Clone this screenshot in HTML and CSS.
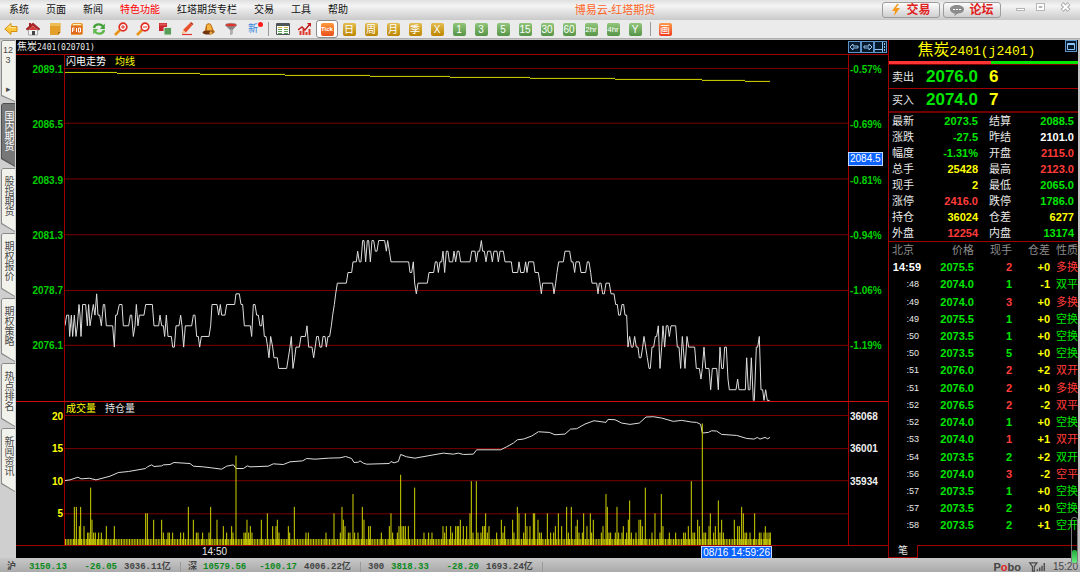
FILE: index.html
```html
<!DOCTYPE html>
<html lang="zh-CN">
<head>
<meta charset="utf-8">
<title>博易云-红塔期货</title>
<link rel="stylesheet" href="styles.css">
</head>
<body>
<div class="app">
  <header class="titlebar">
    <nav class="menu">
      <button>系统</button><button>页面</button><button>新闻</button><button class="hot">特色功能</button><button>红塔期货专栏</button><button>交易</button><button>工具</button><button>帮助</button>
    </nav>
    <h1 class="app-name">博易云-红塔期货</h1>
    <div class="actions">
      <button class="pill"><svg width="10" height="12" viewBox="0 0 10 12"><path d="M6 0L1 7h3L3 12 9 4H5L8 0z" fill="#f39a1d"/></svg>交易</button>
      <button class="pill"><svg width="14" height="12" viewBox="0 0 14 12"><path d="M7 1C3 1 0 2.800 0 5.200S3 9.500 5 9.600L4 12l4-2.500c4-.2 6-2 6-4.300S11 1 7 1z" fill="#8c8c8c"/><path d="M3 5h2v1H3zM6 5h2v1H6zM9 5h2v1H9z" fill="#fff"/></svg>论坛</button>
    </div>
    <div class="window-controls">
      <button aria-label="最小化"><svg width="11" height="12" viewBox="0 0 11 12"><rect x="1.500" y="7.500" width="8" height="2" fill="#fff" stroke="#b5b5b5"/></svg></button>
      <button aria-label="还原"><svg width="11" height="12" viewBox="0 0 11 12"><rect x="1.500" y="2.500" width="8" height="7" fill="#fff" stroke="#b5b5b5"/><path d="M4 5.500h3v1H4z" fill="#ddd" stroke="#b5b5b5"/></svg></button>
      <button aria-label="关闭" class="close"><svg width="11" height="12" viewBox="0 0 11 12"><path d="M2 2.500l7 7M9 2.500l-7 7" stroke="#aaa" stroke-width="4"/><path d="M2.500 3l6 6M8.500 3l-6 6" stroke="#fff" stroke-width="2"/></svg></button>
    </div>
  </header>

  <div class="toolbar">
    <button aria-label="后退"><svg width="14" height="14" viewBox="0 0 14 14"><path d="M7 1.500v3h6v5H7v3L.8 7z" fill="#fcc53a" stroke="#d48f12"/><path d="M3 6.500l3-3v2h6" fill="none" stroke="#ffe691"/></svg></button>
    <button aria-label="首页"><svg width="14" height="14" viewBox="0 0 14 14"><path d="M2.500 6h9v7h-9z" fill="#f2f2f2" stroke="#aaa"/><path d="M3 1h2v3H3z" fill="#a92020"/><path d="M0 7l7-6 7 6-1.500 1L7 3.500 1.500 8z" fill="#b51f22" stroke="#86191b" stroke-width=".6"/><path d="M7 4L3 7.500V8h8v-.5z" fill="#d63a35"/><path d="M6 9h3v4H6z" fill="#444"/></svg></button>
    <button aria-label="笔记"><svg width="14" height="14" viewBox="0 0 14 14"><path d="M2 1h10.500v9L10 13H2z" fill="#e2a02a"/><path d="M2 1h10.500v3H2z" fill="#efbd55"/><path d="M12.500 10H10v3z" fill="#a76a0c"/></svg></button>
    <button aria-label="F10"><svg width="14" height="14" viewBox="0 0 14 14"><path d="M1 3l2-2h9l1 2v9l-2 1H1z" fill="#ec9a35"/><path d="M1 4h11v8H1z" fill="#e26a20"/><path d="M3 2h8v1H3z" fill="#fff0c0"/><path d="M2.500 10V6h2M3 8h1.500M6.500 6v4M8.500 6h2v4h-2z" fill="none" stroke="#fff" stroke-width="1"/></svg></button>
    <button aria-label="刷新"><svg width="14" height="14" viewBox="0 0 14 14"><path d="M2 6c.5-4 7-5 9-1.500" fill="none" stroke="#45a139" stroke-width="2.400"/><path d="M12.800 1.500V7H8z" fill="#45a139"/><path d="M12 8c-.5 4-7 5-9 1.500" fill="none" stroke="#5eb84c" stroke-width="2.400"/><path d="M1.200 12.500V7H6z" fill="#5eb84c"/></svg></button>
    <button aria-label="放大"><svg width="14" height="14" viewBox="0 0 14 14"><path d="M6 8l-5 5" stroke="#e99417" stroke-width="2.600"/><circle cx="9" cy="5" r="3.800" fill="#fff" stroke="#e02c22" stroke-width="1.700"/><path d="M7 5h4M9 3v4" stroke="#e02c22"/></svg></button>
    <button aria-label="缩小"><svg width="14" height="14" viewBox="0 0 14 14"><path d="M6 8l-5 5" stroke="#e99417" stroke-width="2.600"/><circle cx="9" cy="5" r="3.800" fill="#fff" stroke="#e02c22" stroke-width="1.700"/><path d="M7 5h4" stroke="#e02c22"/></svg></button>
    <button aria-label="叠加"><svg width="14" height="14" viewBox="0 0 14 14"><path d="M1 1h8v8H1z" fill="#c8262b"/><path d="M1.500 1.500h7v2h-7z" fill="#df5552"/><path d="M6 5.500h7.500V13H6z" fill="#5a9c5a" stroke="#dfe9df"/></svg></button>
    <button aria-label="画线"><svg width="14" height="14" viewBox="0 0 14 14"><path d="M3 8l7-7 2.500 2L6 10.500z" fill="#e8502c"/><path d="M10 1l1-1 2.500 2-1 1z" fill="#b72b17"/><path d="M3 8l-1.500 4L6 10.500z" fill="#f6c48c"/><path d="M2 12.500h10" stroke="#e0352b" stroke-width="1.200"/></svg></button>
    <button aria-label="预警"><svg width="14" height="14" viewBox="0 0 14 14"><path d="M4 3C6 0 9 1 10 4l1 3 2 3-3 2-9-1 2-3z" fill="#c06f16"/><path d="M5 3c1-1 3-1 4 1l1 4-5 1z" fill="#f3b53f"/><ellipse cx="6" cy="10.500" rx="5.500" ry="2" fill="#703313"/><circle cx="9" cy="11" r="1.700" fill="#e2a743"/></svg></button>
    <button aria-label="筛选"><svg width="14" height="14" viewBox="0 0 14 14"><path d="M1 3l5 5v5l2.500-1V8L13 3z" fill="#858585"/><ellipse cx="7" cy="3" rx="5.500" ry="1.700" fill="#e0352b" stroke="#888" stroke-width=".6"/><path d="M6.500 7.500h1v5h-1z" fill="#d7d7d7"/></svg></button>
    <button class="new-mark" aria-label="新功能">新<i></i></button>
    <span class="sep"></span>
    <button aria-label="报价表"><svg width="14" height="14" viewBox="0 0 14 14"><path d="M.5 1.500h13v11H.5z" fill="#fff" stroke="#4c5658"/><path d="M1 2h12v2H1z" fill="#4c5658"/><path d="M2 5.500h4M8 5.500h4" stroke="#d8b43a"/><path d="M2 7.500h4M2 9.500h4M2 11.500h4M8 7.500h4M8 9.500h4M8 11.500h4" stroke="#5f9f58"/></svg></button>
    <button aria-label="走势图"><svg width="14" height="14" viewBox="0 0 14 14"><path d="M2.500 13V9M5.500 13V7M8.500 13v-3M11.500 13V7" stroke="#e2362b" stroke-width="2"/><path d="M0 8l4-3 3 3 5-6" fill="none" stroke="#c41b1b" stroke-width="1.500"/><path d="M9 1h4v4z" fill="#c41b1b"/></svg></button>
    <button class="active"><span class="period tick">Tick</span></button>
    <button><span class="period gold">日</span></button>
    <button><span class="period gold">周</span></button>
    <button><span class="period gold">月</span></button>
    <button><span class="period gold">季</span></button>
    <button><span class="period gold">X</span></button>
    <button><span class="period green">1</span></button>
    <button><span class="period green">3</span></button>
    <button><span class="period green">5</span></button>
    <button><span class="period green">15</span></button>
    <button><span class="period green">30</span></button>
    <button><span class="period green">60</span></button>
    <button><span class="period green small">2hr</span></button>
    <button><span class="period green small">4hr</span></button>
    <button><span class="period green">Y</span></button>
    <span class="sep"></span>
    <button><span class="period red">画</span></button>
  </div>

  <main class="workspace">
    <aside class="tabs">
      <button class="tab first"><span class="num">12</span><span class="num">3</span><span class="arrow">▸</span></button>
      <button class="tab selected"><span>国内期货</span></button>
      <button class="tab"><span>股指期货</span></button>
      <button class="tab"><span>期权报价</span></button>
      <button class="tab"><span>期权策略</span></button>
      <button class="tab"><span>热点排名</span></button>
      <button class="tab"><span>新闻资讯</span></button>
    </aside>

    <section class="chart">
      <div class="chart-title">
        <span>焦炭<span class="code">2401(020701)</span></span>
        <div class="chart-tools">
          <button aria-label="左移"><svg width="13" height="12" viewBox="0 0 13 12"><rect class="frame" x=".5" y=".5" width="12" height="11"/><path class="ink" d="M2 6l3-3v2h5v2H5v2z"/></svg></button>
          <button aria-label="右移"><svg width="13" height="12" viewBox="0 0 13 12"><rect class="frame" x=".5" y=".5" width="12" height="11"/><path class="ink" d="M11 6L8 3v2H3v2h5v2z"/></svg></button>
          <button aria-label="侧栏"><svg width="13" height="12" viewBox="0 0 13 12"><rect class="frame" x=".5" y=".5" width="12" height="11"/><path class="ink" d="M1 8.500h7M8.500 1v10M10.500 2v2M10.500 5v2M10.500 8v2"/></svg></button>
        </div>
      </div>

      <div class="panel price">
        <div class="axis left"><span>2089.1</span><span>2086.5</span><span>2083.9</span><span>2081.3</span><span>2078.7</span><span>2076.1</span></div>
        <div class="plot">
          <svg viewBox="0 0 783 347" preserveAspectRatio="none">
            <path class="grid-line" d="M0 13.500H783M0 68.500H783M0 124.500H783M0 180.500H783M0 236.500H783M0 291.500H783"/>
            <path class="average" d="M0 17.500H52M52 18.500H135M135 19.500H220M220 20.500H305M305 21.500H385M385 22.500H465M465 23.500H550M550 24.500H637M637 25.500H680M680 26.500H705"/>
            <g transform="translate(-5 186.300) scale(.33333 10.700)">
              <path class="series" d="M15 8L20 7 26 7 29 9 34 7 38 9 43 7 48 9 52 8 57 6 60 7 63 9 68 6 77 6 82 8 86 6 90 8 95 7 100 6 105 7 110 5 114 7 119 7 124 8 130 6 134 6 139 8 158 8 163 10 167 7 171 7 178 6 186 6 190 8 206 8 211 7 215 7 220 9 225 8 229 6 234 8 238 7 252 7 257 6 277 6 282 8 296 8 300 7 305 8 310 8 314 9 319 7 324 9 334 9 338 10 343 10 348 8 357 8 362 7 366 8 371 10 376 8 395 8 400 7 405 7 410 9 415 9 419 10 424 9 447 9 452 8 456 6 471 6 476 7 481 6 485 7 495 7 500 6 524 6 528 5 538 5 543 6 548 6 553 8 571 8 575 9 580 6 585 6 590 7 595 7 600 8 605 8 608 7 613 9 618 9 623 10 627 11 632 9 638 10 642 11 652 11 656 12 680 12 685 11 690 10 694 9 699 12 704 11 708 10 718 10 723 9 736 9 741 8 746 10 756 10 761 11 770 9 775 9 780 10 785 10 789 9 795 9 799 10 804 9 809 9 814 8 818 7 823 6 827 5 832 4 859 4 864 3 875 3 879 2 889 2 893 1 898 2 903 2 908 0 912 0 917 2 922 0 926 0 931 2 936 0 941 0 946 1 951 1 956 0 974 0 979 1 983 0 988 1 993 2 1046 2 1050 3 1055 3 1060 2 1064 4 1069 5 1074 4 1102 4 1107 3 1121 3 1126 2 1131 2 1135 3 1140 2 1145 2 1149 1 1154 3 1159 1 1164 1 1168 2 1178 2 1182 1 1187 2 1192 1 1197 1 1202 2 1230 2 1235 1 1245 1 1249 2 1254 1 1259 1 1264 0 1268 1 1273 1 1278 2 1283 1 1292 1 1297 2 1302 1 1311 1 1315 2 1320 1 1330 1 1335 2 1354 2 1358 3 1373 3 1377 2 1382 3 1392 3 1397 2 1401 3 1406 2 1421 2 1425 3 1435 3 1440 4 1444 5 1448 4 1478 4 1482 5 1487 4 1491 3 1496 2 1510 2 1515 1 1529 1 1534 2 1539 2 1544 3 1548 2 1558 2 1563 3 1577 3 1582 2 1587 2 1592 3 1596 4 1610 4 1614 5 1618 4 1623 4 1628 5 1633 5 1638 4 1648 4 1653 5 1662 5 1667 6 1672 6 1676 7 1681 7 1686 6 1691 6 1695 7 1700 7 1704 10 1709 9 1714 10 1719 10 1724 9 1729 10 1734 10 1738 11 1743 11 1748 10 1752 9 1757 10 1762 11 1767 12 1771 12 1776 10 1781 10 1786 9 1790 9 1795 8 1800 12 1805 10 1809 8 1814 10 1819 8 1824 8 1828 9 1833 8 1847 8 1852 10 1857 10 1862 12 1867 9 1875 12 1881 9 1886 10 1904 10 1909 12 1918 12 1923 13 1927 12 1932 10 1937 12 1947 12 1952 14 1957 12 1970 12 1975 14 1980 10 1985 12 1990 12 1994 10 1999 10 2004 13 2008 14 2028 14 2033 13 2037 14 2056 14 2060 11 2065 14 2070 14 2074 11 2080 15 2083 15 2089 10 2093 10 2098 9 2103 14 2108 14 2112 15 2117 14 2122 15 2129 15"/>
            </g>
          </svg>
          <div class="legend"><span class="yellow">闪电走势</span><span class="yellow">均线</span></div>
        </div>
        <div class="axis right"><span>-0.57%</span><span>-0.69%</span><span>-0.81%</span><span>-0.94%</span><span>-1.06%</span><span>-1.19%</span><output class="cursor-price">2084.5</output></div>
      </div>

      <div class="panel volume">
        <div class="axis left"><span>20</span><span>15</span><span>10</span><span>5</span></div>
        <div class="plot">
          <svg viewBox="0 0 783 143" preserveAspectRatio="none">
            <path class="grid-line" d="M0 13.500H783M0 46.500H783M0 78.500H783M0 111.500H783"/>
            <g transform="translate(-5 -2) scale(.33333)">
              <path class="series" d="M15 241L30 239 54 231 63 236 88 234 108 239 150 228 175 217 205 214 257 205 262 200 275 194 282 199 305 197 310 194 330 193 342 187 390 190 400 198 430 200 455 203 485 207 500 198 520 194 528 205 550 205 562 197 570 200 625 198 640 191 670 193 690 185 728 182 740 175 765 177 805 174 840 173 857 169 875 175 882 187 895 186 900 182 910 189 920 192 988 190 993 184 1002 188 1015 184 1022 163 1040 170 1065 174 1110 166 1150 159 1180 162 1195 159 1210 163 1240 162 1250 149 1322 149 1340 140 1360 129 1372 119 1390 117 1415 108 1435 95 1468 97 1485 104 1515 102 1532 87 1550 86 1575 72 1602 62 1638 67 1644 58 1665 59 1685 69 1710 73 1738 69 1758 51 1780 50 1805 54 1840 64 1865 61 1895 66 1910 67 1922 73 1927 99 1945 97 1955 92 1970 93 1985 103 2030 106 2060 115 2082 117 2092 112 2100 117 2115 112 2123 116 2130 112"/>
            </g>
            <path class="unit-bars" d="M0 139.500H706"/>
            <g transform="translate(-5 143) scale(.33333 6.400)">
              <path class="bars" d="M43 0V-6M49 0V-6M58 0V-3M62 0V-6M72 0V-3M83 0V-2M87 0V-2M92 0V-9M96 0V-4M101 0V-2M106 0V-2M116 0V-2M124 0V-2M139 0V-3M163 0V-3M257 0V-5M262 0V-5M281 0V-4M305 0V-4M310 0V-2M324 0V-2M328 0V-2M338 0V-2M362 0V-2M371 0V-2M385 0V-6M400 0V-4M409 0V-2M414 0V-2M428 0V-2M447 0V-2M452 0V-6M471 0V-4M490 0V-3M500 0V-2M515 0V-3M519 0V-2M528 0V-14"/>
              <path class="bars" d="M552 0V-2M557 0V-2M561 0V-4M566 0V-2M571 0V-3M576 0V-2M604 0V-4M622 0V-5M638 0V-3M648 0V-3M652 0V-4M657 0V-2M685 0V-3M689 0V-2M703 0V-6M738 0V-2M745 0V-2M798 0V-2M822 0V-5M841 0V-2M846 0V-6M850 0V-4M855 0V-3M865 0V-2M870 0V-2M879 0V-8M884 0V-2M894 0V-2M907 0V-6M912 0V-4M926 0V-3M931 0V-3M964 0V-2M988 0V-3M993 0V-5M998 0V-2M1012 0V-2M1017 0V-3M1022 0V-11M1026 0V-3M1031 0V-3M1036 0V-3M1045 0V-3M1064 0V-9M1092 0V-2M1106 0V-2M1116 0V-2M1149 0V-3M1154 0V-2M1159 0V-3M1172 0V-3M1177 0V-2M1187 0V-3M1192 0V-3M1196 0V-3M1201 0V-4M1210 0V-3M1220 0V-3M1230 0V-5M1234 0V-10M1239 0V-2M1249 0V-10M1254 0V-2M1263 0V-2M1268 0V-3M1273 0V-3M1277 0V-5M1282 0V-2M1287 0V-3"/>
              <path class="bars" transform="translate(1260)" d="M50 0V-2M64 0V-4M69 0V-2M74 0V-3M98 0V-4M102 0V-2M112 0V-6M117 0V-5M131 0V-2M136 0V-5M141 0V-3M150 0V-3M160 0V-5M164 0V-5M174 0V-4M179 0V-2M184 0V-2M202 0V-5M212 0V-2M221 0V-2M226 0V-3M235 0V-5M245 0V-3M260 0V-6M265 0V-2M274 0V-6M288 0V-3M292 0V-4M297 0V-2M307 0V-2M311 0V-5M321 0V-3M331 0V-5M335 0V-2M340 0V-4M364 0V-2M369 0V-3M378 0V-8M382 0V-6M387 0V-2M392 0V-2M406 0V-2M411 0V-6M416 0V-2M426 0V-2M430 0V-3M440 0V-2M445 0V-4M449 0V-7M454 0V-2M468 0V-2M477 0V-4M482 0V-4M487 0V-3M496 0V-9M516 0V-2M525 0V-5M540 0V-2M544 0V-8M549 0V-3M568 0V-2M587 0V-2M611 0V-2M616 0V-2M625 0V-3M634 0V-10M639 0V-2M644 0V-2M653 0V-4M658 0V-3M667 0V-19M672 0V-2M677 0V-2M687 0V-3M691 0V-5M701 0V-2M706 0V-3M715 0V-7M720 0V-2M725 0V-4M730 0V-2M763 0V-4M773 0V-3M778 0V-3M785 0V-6M790 0V-5M795 0V-2M800 0V-2M810 0V-2M824 0V-5M838 0V-2M843 0V-2M852 0V-2M856 0V-3M861 0V-2M867 0V-2M871 0V-2"/>
            </g>
          </svg>
          <div class="legend"><span class="yellow">成交量</span><span>持仓量</span></div>
        </div>
        <div class="axis right white"><span>36068</span><span>36001</span><span>35934</span></div>
      </div>

      <div class="time-axis"><span>14:50</span><output class="cursor-time">08/16 14:59:26</output></div>
    </section>

    <section class="quote">
      <div class="quote-head"><h2>焦炭<span>2401(j2401)</span></h2>
        <button aria-label="窗口"><svg width="12" height="12" viewBox="0 0 12 12"><rect class="frame" x=".5" y=".5" width="11" height="11"/><path class="ink" d="M2.500 3.500h7v6h-7zM2.500 4.500h7"/></svg></button>
      </div>
      <div class="ratio"><i></i></div>
      <div class="offer"><span>卖出</span><b class="g">2076.0</b><b class="y">6</b></div>
      <div class="offer last"><span>买入</span><b class="g">2074.0</b><b class="y">7</b></div>
      <table class="facts">
        <tr><th>最新</th><td class="g">2073.5</td><th>结算</th><td class="g">2088.5</td></tr>
        <tr><th>涨跌</th><td class="g">-27.5</td><th>昨结</th><td class="w">2101.0</td></tr>
        <tr><th>幅度</th><td class="g">-1.31%</td><th>开盘</th><td class="r">2115.0</td></tr>
        <tr><th>总手</th><td class="y">25428</td><th>最高</th><td class="r">2123.0</td></tr>
        <tr><th>现手</th><td class="y">2</td><th>最低</th><td class="g">2065.0</td></tr>
        <tr><th>涨停</th><td class="r">2416.0</td><th>跌停</th><td class="g">1786.0</td></tr>
        <tr><th>持仓</th><td class="y">36024</td><th>仓差</th><td class="y">6277</td></tr>
        <tr><th>外盘</th><td class="r">12254</td><th>内盘</th><td class="g">13174</td></tr>
      </table>
      <div class="ticks-wrap">
        <table class="ticks">
          <thead><tr><th>北京</th><th>价格</th><th>现手</th><th>仓差</th><th>性质</th></tr></thead>
          <tbody>
            <tr><td class="full">14:59</td><td class="g">2075.5</td><td class="r">2</td><td class="y">+0</td><td class="r">多换</td></tr>
            <tr><td>:48</td><td class="g">2074.0</td><td class="g">1</td><td class="y">-1</td><td class="g">双平</td></tr>
            <tr><td>:49</td><td class="g">2074.0</td><td class="r">3</td><td class="y">+0</td><td class="r">多换</td></tr>
            <tr><td>:49</td><td class="g">2075.5</td><td class="g">1</td><td class="y">+0</td><td class="g">空换</td></tr>
            <tr><td>:50</td><td class="g">2073.5</td><td class="g">1</td><td class="y">+0</td><td class="g">空换</td></tr>
            <tr><td>:50</td><td class="g">2073.5</td><td class="g">5</td><td class="y">+0</td><td class="g">空换</td></tr>
            <tr><td>:51</td><td class="g">2076.0</td><td class="r">2</td><td class="y">+2</td><td class="r">双开</td></tr>
            <tr><td>:51</td><td class="g">2076.0</td><td class="r">2</td><td class="y">+0</td><td class="r">多换</td></tr>
            <tr><td>:52</td><td class="g">2076.5</td><td class="r">2</td><td class="y">-2</td><td class="r">双平</td></tr>
            <tr><td>:52</td><td class="g">2074.0</td><td class="g">1</td><td class="y">+0</td><td class="g">空换</td></tr>
            <tr><td>:53</td><td class="g">2074.0</td><td class="r">1</td><td class="y">+1</td><td class="r">双开</td></tr>
            <tr><td>:54</td><td class="g">2073.5</td><td class="g">2</td><td class="y">+2</td><td class="g">双开</td></tr>
            <tr><td>:56</td><td class="g">2074.0</td><td class="r">3</td><td class="y">-2</td><td class="r">空平</td></tr>
            <tr><td>:57</td><td class="g">2073.5</td><td class="g">1</td><td class="y">+0</td><td class="g">空换</td></tr>
            <tr><td>:57</td><td class="g">2073.5</td><td class="g">2</td><td class="y">+0</td><td class="g">空换</td></tr>
            <tr><td>:58</td><td class="g">2073.5</td><td class="g">2</td><td class="y">+1</td><td class="g">空开</td></tr>
          </tbody>
        </table>
      </div>
      <div class="quote-tabs"><button>笔</button></div>
    </section>
  </main>

  <footer class="status">
    <div class="index sh"><span>沪</span><b>3150.13</b><b class="change">-26.05</b><span>3036.11亿</span></div>
    <div class="index sz"><span>深</span><b>10579.56</b><b class="change">-100.17</b><span>4006.22亿</span></div>
    <div class="index hs"><span>300</span><b>3818.33</b><b class="change">-28.20</b><span>1693.24亿</span></div>
    <div class="brand">P<em>o</em>bo</div>
    <svg class="signal" width="18" height="10" viewBox="0 0 18 11"><path d="M1 1h8L6 5v5H4V5z" fill="none" stroke="#4a4a4a" stroke-width="1.300"/><path d="M9.500 8v2M12 6v4M14.500 4v6M17 1v9" stroke="#4a4a4a" stroke-width="1.500"/></svg>
    <time>15:20</time>
  </footer>
  <div class="gauge"><i></i></div>
</div>
</body>
</html>
```
FILE: styles.css
```css
* { box-sizing: border-box; }

body {
  margin: 0;
  background: #c4c4c4;
  font-family: "Liberation Sans", "Noto Sans CJK SC", sans-serif;
  font-size: 10px;
  line-height: 12px;
  color: #e8e8e8;
}

button {
  margin: 0;
  padding: 0;
  border: 0;
  background: none;
  font: inherit;
  color: inherit;
}

svg { display: block; }
i, em { font-style: normal; }

.g { color: #00e600; }
.r { color: #ff3b3b; }
.y { color: #ffff00; }
.w { color: #ffffff; }

.app {
  position: relative;
  display: flex;
  flex-direction: column;
  height: 100vh;
  min-height: 480px;
  overflow: hidden;
}

/* Title bar */
.titlebar {
  display: flex;
  align-items: center;
  flex: 0 0 20px;
  padding-left: 9px;
  background: linear-gradient(#e0e0e0, #f4f4f4 30%, #c9c9c9);
  color: #111;
}
.menu { display: flex; gap: 17px; }
.menu .hot { color: #ff0000; }
.app-name {
  margin: 0 auto;
  font-size: 11px;
  font-weight: 400;
  color: #ff6426;
}
.actions { display: flex; gap: 3px; }
.pill {
  display: flex;
  align-items: center;
  justify-content: center;
  gap: 5px;
  width: 58px;
  height: 16px;
  border: 1px solid #9d9d9d;
  border-radius: 3px;
  background: linear-gradient(#fdfdfd, #cfcfcf);
  font-size: 12px;
  font-weight: 700;
  color: #e01f1f;
}
.window-controls {
  display: flex;
  gap: 9px;
  padding: 0 9px 7px 14px;
}
.window-controls .close { margin-left: 5px; }

/* Toolbar */
.toolbar {
  display: flex;
  align-items: center;
  flex: 0 0 18px;
  background: #ebebeb;
  border-bottom: 1px solid #b0b0b0;
}
.toolbar button {
  display: flex;
  align-items: center;
  justify-content: center;
  width: 22px;
  height: 18px;
}
.toolbar .active {
  border: 1px solid #8c8c8c;
  border-radius: 3px;
  background: #fff;
}
.toolbar .new-mark {
  position: relative;
  font-weight: 400;
  color: #2d86dc;
}
.new-mark i {
  position: absolute;
  top: 2px;
  right: 1px;
  width: 5px;
  height: 5px;
  border-radius: 50%;
  background: #ff1a1a;
}
.sep {
  width: 8px;
  height: 14px;
  background: linear-gradient(#999, #999) center / 1px 100% no-repeat;
}
.period {
  width: 13px;
  height: 13px;
  border-radius: 2px;
  overflow: hidden;
  text-align: center;
  font-size: 10px;
  line-height: 13px;
  color: #fff;
}
.period.small { font-size: 8px; }
.period.tick { font-size: 6px; font-weight: 700; background: linear-gradient(#ff9a3c, #ea4f1c); }
.period.gold { background: linear-gradient(#e2bd50, #bd8500); }
.period.green { background: linear-gradient(#91c67a, #569448); }
.period.red { background: linear-gradient(#ff9a4a, #ef3b20); }

/* Workspace */
.workspace {
  display: flex;
  flex: 1;
  min-height: 0;
  padding: 1px 2px 0 0;
}

.tabs {
  flex: 0 0 16px;
  padding: 0 1px;
  background: #cfcfcf;
}
.tab {
  position: relative;
  z-index: 0;
  display: flex;
  align-items: center;
  justify-content: center;
  width: 14px;
  height: 64px;
  margin-bottom: 1px;
  padding-bottom: 8px;
  background: #8a8a8a;
  color: #4a4a4a;
  clip-path: polygon(2px 0, 100% 0, 100% 100%, 0 56px, 0 2px);
}
.tab::before {
  content: "";
  position: absolute;
  z-index: -1;
  inset: 1px;
  right: 0;
  background: #f2f2ec;
  clip-path: polygon(1px 0, 100% 0, 100% 100%, 0 54px, 0 1px);
}
.tab span { writing-mode: vertical-rl; }
.tab.first {
  flex-direction: column;
  justify-content: flex-start;
  height: 62px;
  padding-top: 5px;
  font-size: 9px;
  line-height: 10px;
}
.tab.first span { writing-mode: horizontal-tb; }
.tab.first .arrow { margin-top: auto; }
.tab.selected { background: #4f4f4f; color: #fff; }
.tab.selected::before { background: #777; }

/* Chart */
.chart {
  display: flex;
  flex: 1;
  flex-direction: column;
  min-width: 0;
  background: #000;
}
.chart-title {
  display: flex;
  justify-content: space-between;
  flex: 0 0 15px;
  padding-left: 1px;
  border-bottom: 1px solid #a00000;
  line-height: 13px;
}
.code { font-family: "DejaVu Sans Mono", monospace; font-size: 8px; }
.chart-tools { display: flex; padding-right: 1px; }
.frame { fill: #06192b; stroke: #5c93c9; }
.ink { fill: none; stroke: #8fc4f4; }

.panel {
  display: grid;
  grid-template-columns: 48px 1fr 39px;
  min-height: 0;
}
.price { flex: 347 1 0; }
.volume { flex: 144 1 0; border-top: 1px solid #d01010; }
.plot {
  display: grid;
  min-height: 0;
  border: solid #a00000;
  border-width: 0 1px;
}
.plot svg {
  grid-area: 1 / 1;
  width: 100%;
  height: 100%;
  min-height: 0;
}
.plot path { fill: none; vector-effect: non-scaling-stroke; }
.legend {
  grid-area: 1 / 1;
  display: flex;
  gap: 9px;
  align-self: start;
  padding: 1px;
}
.yellow { color: #ffff00; }
.price .legend span:first-child { color: #fff; }
.grid-line { stroke: #7c0000; }
.average { stroke: #d8d800; }
.series { stroke: #dedede; }
.bars { stroke: #d2d200; }
.unit-bars { stroke: #c4c400; stroke-width: 6; stroke-dasharray: 1 0.6; }

.axis {
  display: flex;
  flex-direction: column;
  padding: 9px 1px 5px;
  font-weight: 700;
  color: #00d000;
}
.axis span { flex: 1 1 0; }
.axis.left { text-align: right; }
.axis.right { position: relative; }
.volume .axis { padding-bottom: 4px; }
.volume .axis.left { color: #ffff00; }
.volume .axis.white { display: grid; grid-template-rows: repeat(4, 1fr); color: #f0f0f0; }

.cursor-price {
  position: absolute;
  top: 28%;
  left: -1px;
  padding: 0 1px;
  border: 1px solid #c4d8ff;
  background: #0a62ff;
  font-weight: 400;
  color: #fff;
}
.time-axis {
  display: flex;
  justify-content: space-between;
  flex: 0 0 13px;
  padding: 0 116px 0 186px;
  border-top: 1px solid #a00000;
}
.cursor-time {
  padding: 0 1px;
  border: 1px solid #c4d8ff;
  border-bottom: 0;
  background: #0a62ff;
  color: #fff;
  line-height: 11px;
  white-space: nowrap;
}

/* Quote panel */
.quote {
  display: flex;
  flex: 0 0 190px;
  flex-direction: column;
  border-left: 1px solid #a00000;
  background: #000;
  font-size: 11px;
}
.quote-head {
  display: flex;
  align-items: center;
  flex: 0 0 19px;
}
.quote-head h2 {
  flex: 1;
  margin: 0;
  font-size: 16px;
  line-height: 19px;
  font-weight: 400;
  text-align: center;
  color: #ffff00;
}
.quote-head h2 span { font-family: "Liberation Mono", monospace; font-size: 13px; }
.quote-head button { align-self: flex-start; padding: 0 1px; }
.ratio {
  flex: 0 0 4px;
  padding-bottom: 1px;
  background: #800000;
}
.ratio i {
  display: block;
  height: 3px;
  background: linear-gradient(90deg, #ff3434 54%, #00e600 54%);
}
.offer {
  display: grid;
  grid-template-columns: 34px 63px 1fr;
  align-items: center;
  flex: 0 0 24px;
  padding-left: 3px;
  border-bottom: 1px solid #a00000;
}
.offer b { font-size: 17px; line-height: 20px; }
.offer.last { border-bottom: 2px solid #700000; }

table { border-collapse: collapse; table-layout: fixed; width: 100%; }
th, td { padding: 0; text-align: right; line-height: 14px; white-space: nowrap; }
th { font-weight: 400; }
td { font-weight: 700; }
.facts { border-bottom: 1px solid #a00000; }
.facts tr { height: 16px; }
.facts th { width: 25px; }
.facts th + td { width: 64px; }
.facts th + td + th { width: 33px; }
.facts td:last-child { width: auto; padding-right: 4px; }

.ticks-wrap { flex: 1; min-height: 0; }
.ticks { height: 100%; }
.ticks thead { color: #8c8c8c; }
.ticks thead tr { height: 17px; }
.ticks th:nth-child(1) { width: 32px; padding-left: 3px; text-align: left; }
.ticks th:nth-child(2) { width: 53px; }
.ticks th:nth-child(3), .ticks th:nth-child(4) { width: 38px; }
.ticks td:nth-child(1) { padding-right: 2px; font-size: 9px; font-weight: 400; }
.ticks td.full { padding-right: 0; font-size: 11px; font-weight: 700; color: #fff; }
.ticks td:nth-child(5) { font-weight: 400; }

.quote-tabs {
  display: flex;
  flex: 0 0 13px;
  margin-top: 11px;
}
.quote-tabs button {
  width: 29px;
  border: solid #a00000;
  border-width: 0 1px 1px 0;
  font-size: 10px;
  line-height: 12px;
}
.quote-tabs::after {
  content: "";
  flex: 1;
  border-top: 1px solid #a00000;
}

/* Status bar */
.status {
  display: flex;
  align-items: center;
  flex: 0 0 14px;
  min-height: 0;
  padding: 4px 2px 0 7px;
  background: linear-gradient(#c8c8c8, #aaa);
  line-height: 10px;
  color: #444;
}
.index {
  display: grid;
  align-items: center;
  height: 10px;
  padding-right: 7px;
  margin-right: 7px;
  border-right: 1px solid #999;
  font-family: "Liberation Mono", "Noto Sans CJK SC", monospace;
  font-size: 9px;
  font-weight: 700;
}
.index b { color: #0a8a1a; }
.index .change { padding-right: 7px; text-align: right; }
.sh { grid-template-columns: 22px 39px 56px 49px; }
.sz { grid-template-columns: 15px 44px 57px 49px; }
.hs { grid-template-columns: 23px 39px 56px 49px; }
.brand { margin-left: auto; font-size: 11px; font-weight: 700; }
.brand em { color: #e01f1f; }
.signal { margin: 0 7px; }
.status time { font-size: 10px; }

.gauge {
  position: absolute;
  right: 2px;
  bottom: 8px;
  display: flex;
  align-items: flex-end;
  width: 7px;
  height: 47px;
  border: 1px solid #777;
  border-radius: 3px;
}
.gauge i {
  width: 100%;
  height: 13px;
  border-radius: 2px;
  background: linear-gradient(#20a83c, #68f080);
}
```
